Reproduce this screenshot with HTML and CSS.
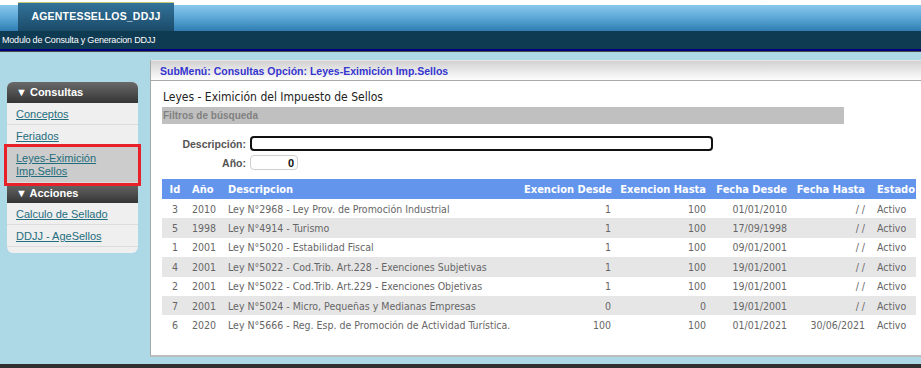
FILE: index.html
```html
<!DOCTYPE html>
<html lang="es">
<head>
    <meta charset="UTF-8">
    <title>AGENTESSELLOS_DDJJ</title>
    <link rel="stylesheet" href="styles.css">
</head>
<body>
<div class="topbar">
    <div class="tab">AGENTESSELLOS_DDJJ</div>
</div>
<div class="modbar">Modulo de Consulta y Generacion DDJJ</div>

<div class="layout">
    <div class="menu">
        <div class="menu-head">&#9660; Consultas</div>
        <div class="menu-item"><a href="#">Conceptos</a></div>
        <div class="menu-item"><a href="#">Feriados</a></div>
        <div class="menu-item active"><a href="#">Leyes-Eximición Imp.Sellos</a></div>
        <div class="menu-head flat">&#9660; Acciones</div>
        <div class="menu-item"><a href="#">Calculo de Sellado</a></div>
        <div class="menu-item"><a href="#">DDJJ - AgeSellos</a></div>
        <div class="menu-foot"></div>
    </div>

    <div class="panel">
        <div class="panel-head">SubMenú: Consultas Opción: Leyes-Eximición Imp.Sellos</div>
        <div class="panel-body">
            <h2>Leyes - Eximición del Impuesto de Sellos</h2>
            <div class="filter-bar">Filtros de búsqueda</div>
            <div class="filters">
                <label for="descripcion">Descripción:</label>
                <input id="descripcion" class="desc-input" type="text">
                <label for="anio">Año:</label>
                <input id="anio" class="year-input" type="text" value="0">
            </div>

            <table class="grid">
                <colgroup>
                    <col class="c-id">
                    <col class="c-year">
                    <col class="c-desc">
                    <col class="c-num">
                    <col class="c-num">
                    <col class="c-date">
                    <col class="c-date2">
                    <col class="c-state">
                </colgroup>
                <thead>
                <tr>
                    <th class="center">Id</th>
                    <th>Año</th>
                    <th>Descripcion</th>
                    <th class="right">Exencion Desde</th>
                    <th class="right">Exencion Hasta</th>
                    <th class="right">Fecha Desde</th>
                    <th class="right">Fecha Hasta</th>
                    <th class="state">Estado</th>
                </tr>
                </thead>
                <tbody>
                <tr>
                    <td class="center">3</td><td>2010</td><td>Ley N°2968 - Ley Prov. de Promoción Industrial</td>
                    <td class="right">1</td><td class="right">100</td><td class="right">01/01/2010</td><td class="right">/ /</td><td class="state">Activo</td>
                </tr>
                <tr>
                    <td class="center">5</td><td>1998</td><td>Ley N°4914 - Turismo</td>
                    <td class="right">1</td><td class="right">100</td><td class="right">17/09/1998</td><td class="right">/ /</td><td class="state">Activo</td>
                </tr>
                <tr>
                    <td class="center">1</td><td>2001</td><td>Ley N°5020 - Estabilidad Fiscal</td>
                    <td class="right">1</td><td class="right">100</td><td class="right">09/01/2001</td><td class="right">/ /</td><td class="state">Activo</td>
                </tr>
                <tr>
                    <td class="center">4</td><td>2001</td><td>Ley N°5022 - Cod.Trib. Art.228 - Exenciones Subjetivas</td>
                    <td class="right">1</td><td class="right">100</td><td class="right">19/01/2001</td><td class="right">/ /</td><td class="state">Activo</td>
                </tr>
                <tr>
                    <td class="center">2</td><td>2001</td><td>Ley N°5022 - Cod.Trib. Art.229 - Exenciones Objetivas</td>
                    <td class="right">1</td><td class="right">100</td><td class="right">19/01/2001</td><td class="right">/ /</td><td class="state">Activo</td>
                </tr>
                <tr>
                    <td class="center">7</td><td>2001</td><td>Ley N°5024 - Micro, Pequeñas y Medianas Empresas</td>
                    <td class="right">0</td><td class="right">0</td><td class="right">19/01/2001</td><td class="right">/ /</td><td class="state">Activo</td>
                </tr>
                <tr>
                    <td class="center">6</td><td>2020</td><td>Ley N°5666 - Reg. Esp. de Promoción de Actividad Turística.</td>
                    <td class="right">100</td><td class="right">100</td><td class="right">01/01/2021</td><td class="right">30/06/2021</td><td class="state">Activo</td>
                </tr>
                </tbody>
            </table>
        </div>
    </div>
</div>
<div class="footer"></div>
</body>
</html>
```

FILE: styles.css
```css
body {
    margin: 0;
    padding: 0;
    height: 368px;
    overflow: hidden;
    background-color: #add8e6;
    font-family: "Liberation Sans", Arial, sans-serif;
}

.topbar {
    display: flex;
    box-sizing: border-box;
    height: 31px;
    padding-top: 2px;
    padding-left: 18px;
    background: linear-gradient(to bottom, #fff 0, #fff 5px, #8ac8ed 5px, #5ea9d8 55%, #2f7db2 100%);
}

.tab {
    box-sizing: border-box;
    width: 156px;
    height: 29px;
    border-top: 1px solid #c3cd6d;
    background: linear-gradient(to bottom, #33729a, #1b4b69);
    color: #fff;
    font-size: 10.5px;
    font-weight: bold;
    letter-spacing: 0.2px;
    line-height: 26px;
    text-align: center;
}

.modbar {
    height: 18px;
    line-height: 18px;
    padding-left: 2px;
    background-color: #0e3a52;
    border-bottom: 2px solid #00007d;
    color: #fff;
    font-size: 9px;
    letter-spacing: -0.2px;
}

.layout {
    display: flex;
    align-items: flex-start;
    box-sizing: border-box;
    height: 313px;
    padding-left: 7px;
    border-top: 1px solid #4a4a4a;
}

/* menu lateral */
.menu {
    width: 131px;
    margin-top: 30px;
    background-color: #efefef;
    border-radius: 6px;
}

.menu-head {
    height: 21px;
    line-height: 21px;
    padding-left: 9px;
    background: linear-gradient(to bottom, #6a6a6a, #353535);
    border-radius: 6px 6px 0 0;
    color: #fff;
    font-size: 11px;
    font-weight: bold;
}

.menu-head.flat {
    height: 20px;
    line-height: 20px;
    border-radius: 0;
}

.menu-item {
    padding: 5px 9px 4px 9px;
    line-height: 12px;
    border-bottom: 1px solid #dcdcdc;
    font-size: 11px;
}

.menu-item a {
    color: #1f6d7d;
}

.menu-item.active {
    background-color: #cccccc;
    outline: 3px solid #e8202a;
    position: relative;
    line-height: 13px;
}

.menu-foot {
    height: 6px;
    border-radius: 0 0 6px 6px;
}

/* panel principal */
.panel {
    flex: 1;
    box-sizing: border-box;
    height: 297px;
    margin-top: 8px;
    margin-left: 12px;
    background-color: #fff;
    border-left: 1px solid #a8a8a8;
    border-bottom: 2px solid #bdbdbd;
}

.panel-head {
    height: 21px;
    line-height: 21px;
    padding-left: 9px;
    box-sizing: border-box;
    background: linear-gradient(to bottom, #d2d2d2, #fdfdfd);
    border-top: 1px solid #e8e8e8;
    border-bottom: 1px solid #a9a9a9;
    color: #3535cf;
    font-size: 10.5px;
    font-weight: bold;
}

.panel-body {
    padding-left: 11px;
}

h2 {
    margin: 7px 0 0 1px;
    line-height: 19px;
    font-family: "DejaVu Sans Condensed", "DejaVu Sans", sans-serif;
    font-size: 12px;
    font-weight: normal;
    color: #222;
}

.filter-bar {
    width: 682px;
    height: 17px;
    margin-top: 0;
    padding-left: 1px;
    box-sizing: border-box;
    line-height: 17px;
    background-color: #c0c0c0;
    color: #818181;
    font-size: 10px;
    font-weight: bold;
}

.filters {
    display: grid;
    grid-template-columns: 84px auto;
    column-gap: 4px;
    row-gap: 4px;
    align-items: center;
    justify-items: start;
    margin-top: 12px;
}

.filters label {
    justify-self: end;
    color: #555;
    font-size: 10.5px;
    font-weight: bold;
}

.desc-input {
    box-sizing: border-box;
    width: 463px;
    height: 15px;
    border: 2px solid #111;
    border-radius: 4px;
    padding: 0 3px;
}

.year-input {
    box-sizing: border-box;
    width: 48px;
    height: 15px;
    padding: 0 3px 0 0;
    border: 1px solid #cfcfcf;
    border-radius: 4px;
    text-align: right;
    font-family: "Liberation Sans", Arial, sans-serif;
    font-size: 11px;
    font-weight: bold;
    color: #111;
}

/* grilla de leyes */
.grid {
    width: 754px;
    margin-top: 9px;
    border-collapse: collapse;
    table-layout: fixed;
    font-family: "DejaVu Sans Condensed", "DejaVu Sans", sans-serif;
}

.c-id { width: 26px; }
.c-year { width: 36px; }
.c-desc { width: 296px; }
.c-num { width: 95px; }
.c-date { width: 81px; }
.c-date2 { width: 78px; }
.c-state { width: 47px; }

.grid th {
    height: 20px;
    padding: 0 4px;
    background-color: #6495ed;
    color: #fff;
    font-size: 11px;
    font-weight: bold;
    text-align: left;
    white-space: nowrap;
}

.grid td {
    height: 19.4px;
    padding: 0 4px;
    color: #666;
    font-size: 10.5px;
    white-space: nowrap;
}

.grid tbody tr:nth-child(even) td {
    background-color: #e6e6e6;
}

.grid .center {
    text-align: center;
}

.grid .right {
    text-align: right;
}

.grid .state {
    padding-left: 8px;
    padding-right: 0;
}

.footer {
    height: 4px;
    background-color: #303030;
}
```
